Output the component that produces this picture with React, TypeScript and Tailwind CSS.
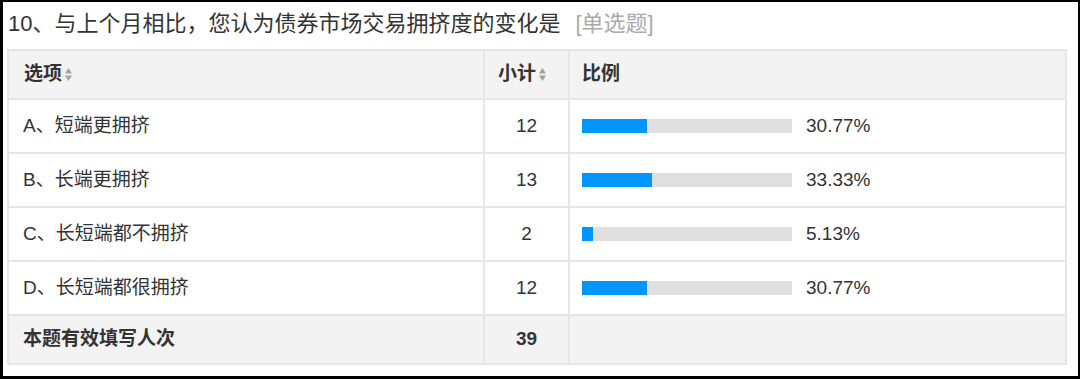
import React from "react"

const rows = [
  { label: "A、短端更拥挤", count: 12, pct: 30.77 },
  { label: "B、长端更拥挤", count: 13, pct: 33.33 },
  { label: "C、长短端都不拥挤", count: 2, pct: 5.13 },
  { label: "D、长短端都很拥挤", count: 12, pct: 30.77 },
]

const SortIcon = () => (
  <svg width="7" height="13" viewBox="0 0 7 13" className="ml-[3px] shrink-0">
    <polygon points="3.5,0 7,5.5 0,5.5" fill="#a3a3a3" />
    <polygon points="0,7.5 7,7.5 3.5,13" fill="#a3a3a3" />
  </svg>
)

const App = () => {
  return (
    <div
      className="w-[1080px] h-[379px] bg-white border-black border-l-[3px] border-r-[2px] border-t-[2px] border-b-[3px] text-[#333]"
      style={{ fontFamily: '"Liberation Sans", "Noto Sans CJK SC", sans-serif' }}
    >
      <div className="h-[47px] pl-[5px] pt-[11px] text-[22px] leading-[22px] whitespace-nowrap">
        10、与上个月相比，您认为债券市场交易拥挤度的变化是
        <span className="ml-[15px] text-[#aaa]">[单选题]</span>
      </div>

      <div className="ml-[4px] w-[1060px] border-2 border-[#e6e6e6] text-[19px]">
        {/* header */}
        <div className="flex h-[49px] bg-[#f3f3f3] border-b-2 border-[#e6e6e6] font-bold">
          <div className="w-[476px] shrink-0 flex items-center pl-[15px] border-r-2 border-[#e6e6e6]">
            选项
            <SortIcon />
          </div>
          <div className="w-[85px] shrink-0 flex items-center justify-center pr-[9px] border-r-2 border-[#e6e6e6]">
            小计
            <SortIcon />
          </div>
          <div className="flex-1 flex items-center pl-[12px]">比例</div>
        </div>

        {rows.map((r, i) => (
          <div key={i} className="flex h-[54px] border-b-2 border-[#e6e6e6]">
            <div className="w-[476px] shrink-0 flex items-center pl-[14px] border-r-2 border-[#e6e6e6]">
              {r.label}
            </div>
            <div className="w-[85px] shrink-0 flex items-center justify-center border-r-2 border-[#e6e6e6]">
              {r.count}
            </div>
            <div className="flex-1 flex items-center pl-[12px]">
              <div className="w-[210px] h-[14px] bg-[#dfdfdf]">
                <div
                  className="h-full bg-[#0095ff]"
                  style={{ width: `${(r.pct / 100) * 210}px` }}
                />
              </div>
              <span className="ml-[14px]">{r.pct.toFixed(2)}%</span>
            </div>
          </div>
        ))}

        {/* footer */}
        <div className="flex h-[47px] bg-[#f3f3f3] font-bold">
          <div className="w-[476px] shrink-0 flex items-center pl-[14px] border-r-2 border-[#e6e6e6]">
            本题有效填写人次
          </div>
          <div className="w-[85px] shrink-0 flex items-center justify-center border-r-2 border-[#e6e6e6]">
            39
          </div>
          <div className="flex-1" />
        </div>
      </div>
    </div>
  )
}

export default App
